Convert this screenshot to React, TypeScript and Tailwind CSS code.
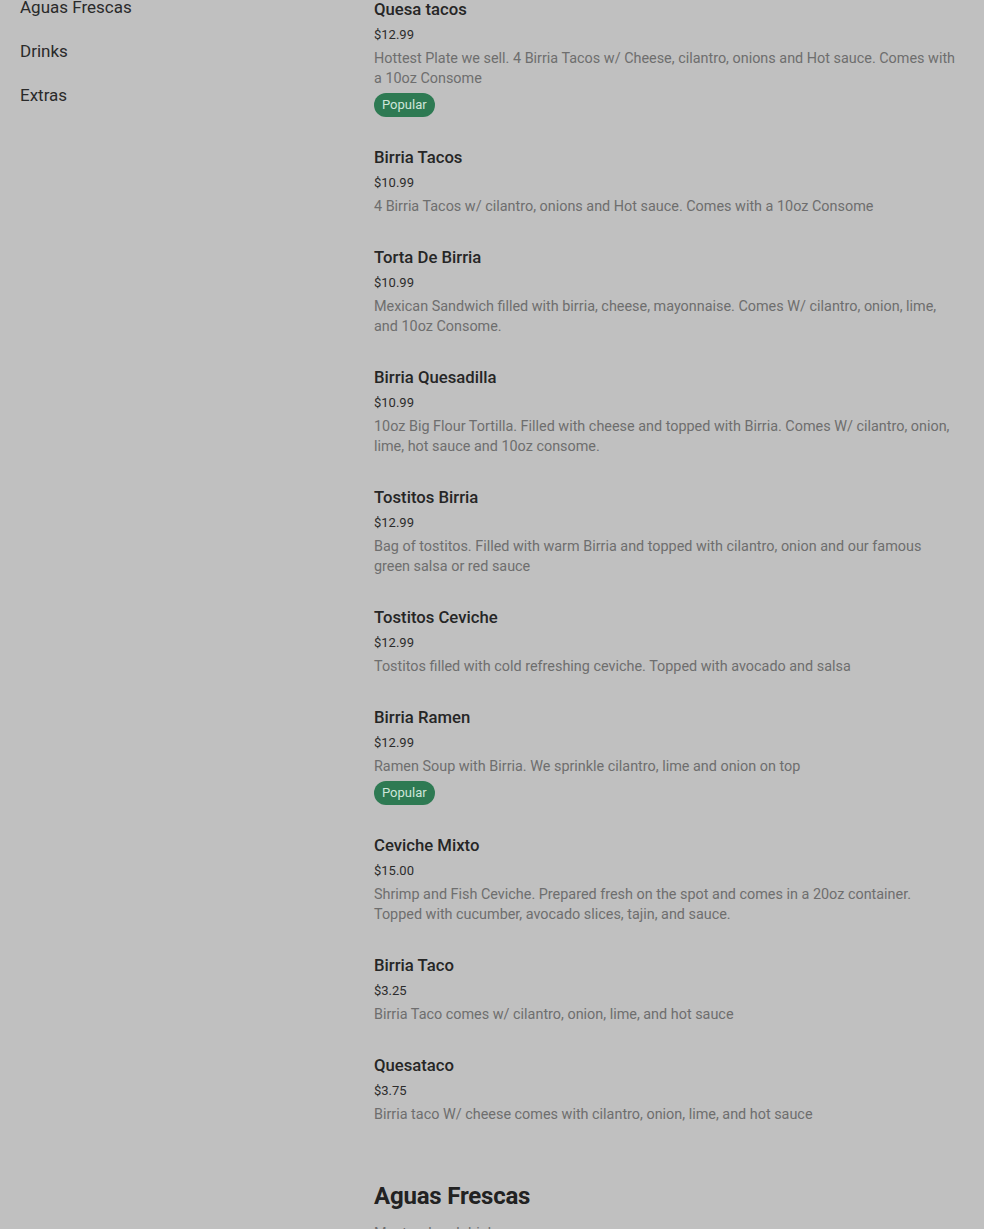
import React from 'react'

type Item = {
  name: string
  price: string
  desc: string
  popular?: boolean
}

const ITEMS: Item[] = [
  {
    name: 'Quesa tacos',
    price: '$12.99',
    desc: 'Hottest Plate we sell. 4 Birria Tacos w/ Cheese, cilantro, onions and Hot sauce. Comes with a 10oz Consome',
    popular: true,
  },
  {
    name: 'Birria Tacos',
    price: '$10.99',
    desc: '4 Birria Tacos w/ cilantro, onions and Hot sauce. Comes with a 10oz Consome',
  },
  {
    name: 'Torta De Birria',
    price: '$10.99',
    desc: 'Mexican Sandwich filled with birria, cheese, mayonnaise. Comes W/ cilantro, onion, lime, and 10oz Consome.',
  },
  {
    name: 'Birria Quesadilla',
    price: '$10.99',
    desc: '10oz Big Flour Tortilla. Filled with cheese and topped with Birria. Comes W/ cilantro, onion, lime, hot sauce and 10oz consome.',
  },
  {
    name: 'Tostitos Birria',
    price: '$12.99',
    desc: 'Bag of tostitos. Filled with warm Birria and topped with cilantro, onion and our famous green salsa or red sauce',
  },
  {
    name: 'Tostitos Ceviche',
    price: '$12.99',
    desc: 'Tostitos filled with cold refreshing ceviche. Topped with avocado and salsa',
  },
  {
    name: 'Birria Ramen',
    price: '$12.99',
    desc: 'Ramen Soup with Birria. We sprinkle cilantro, lime and onion on top',
    popular: true,
  },
  {
    name: 'Ceviche Mixto',
    price: '$15.00',
    desc: 'Shrimp and Fish Ceviche. Prepared fresh on the spot and comes in a 20oz container. Topped with cucumber, avocado slices, tajin, and sauce.',
  },
  {
    name: 'Birria Taco',
    price: '$3.25',
    desc: 'Birria Taco comes w/ cilantro, onion, lime, and hot sauce',
  },
  {
    name: 'Quesataco',
    price: '$3.75',
    desc: 'Birria taco W/ cheese comes with cilantro, onion, lime, and hot sauce',
  },
]

const CATEGORIES = ['Aguas Frescas', 'Drinks', 'Extras']

function MenuItem({ item }: { item: Item }) {
  return (
    <div className="flex flex-col pb-[29px]">
      <h3 className="text-[16.7px] leading-6 font-medium text-[#262626]">{item.name}</h3>
      <div className="mt-[3px] text-[13px] leading-5 text-[#2c2c2c]">{item.price}</div>
      <p className="mt-1 text-[14.4px] leading-5 text-[#6e6e6e]">{item.desc}</p>
      {item.popular && (
        <div className="mt-1 flex">
          <span className="h-6 rounded-full bg-[#2e7a53] px-2 text-[13px] leading-6 text-[#cfe6da]">
            Popular
          </span>
        </div>
      )}
    </div>
  )
}

export default function App() {
  return (
    <div
      className="min-h-screen w-full overflow-hidden bg-[#c0c0c0]"
      style={{ fontFamily: 'Roboto, "Liberation Sans", sans-serif' }}
    >
      <div className="flex items-start">
        {/* categorias */}
        <nav className="-mt-[5px] w-[374px] shrink-0 pl-5">
          <ul className="flex flex-col">
            {CATEGORIES.map((c) => (
              <li key={c} className="h-11 text-[17px] leading-6 text-[#2a2a2a]">
                {c}
              </li>
            ))}
          </ul>
        </nav>

        {/* menu */}
        <main className="-mt-[2px] flex-1 pr-[26px]">
          {ITEMS.map((it) => (
            <MenuItem key={it.name} item={it} />
          ))}
          <h2 className="mt-[26px] text-[24px] leading-8 font-bold tracking-[-0.2px] text-[#222]">
            Aguas Frescas
          </h2>
          <p className="mt-3 text-[14.4px] leading-5 text-[#6e6e6e]">Most ordered drinks</p>
        </main>
      </div>
    </div>
  )
}
